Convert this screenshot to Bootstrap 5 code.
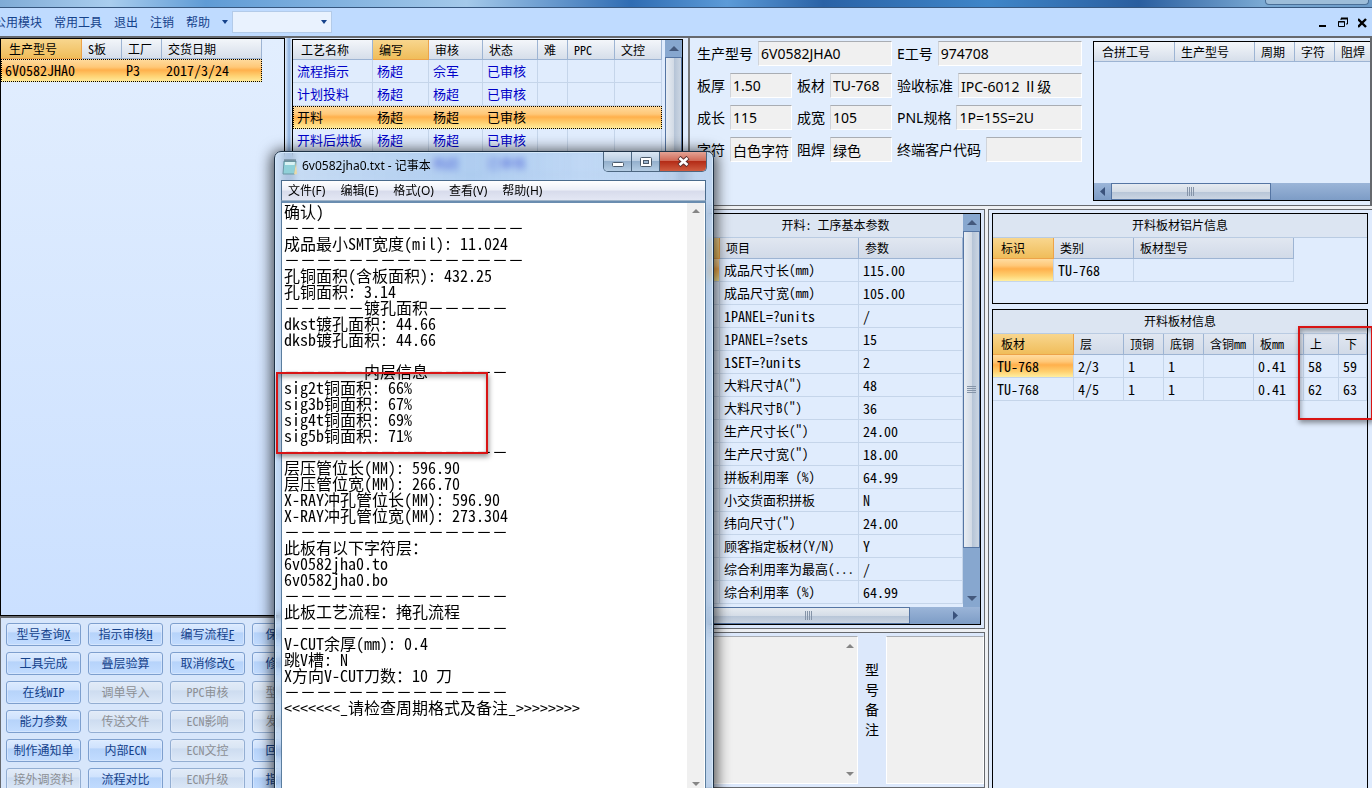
<!DOCTYPE html>
<html lang="zh-CN">
<head>
<meta charset="utf-8">
<meta name="viewport" content="width=device-width, initial-scale=1">
<title>工程管理</title>
<link href="https://cdn.jsdelivr.net/npm/bootstrap@5.3.0/dist/css/bootstrap.min.css" rel="stylesheet">
<style>
:root{--song:"Noto Sans Mono CJK SC","Noto Sans CJK SC",monospace;--ui:"Noto Sans","Noto Sans CJK SC",sans-serif}
html,body{height:100%}
body{font:12px/16px var(--song);color:#000;background:#e0ecfd;overflow:hidden}
button,input,textarea,select{font:inherit;color:inherit}
.titlestrip{height:8px;background:linear-gradient(90deg,#7fabd6,#a9cdee 8%,#5f9bd5 15%,#a4c9ea 34%,#2f6cb3 46%,#5c9bd8 53%,#2a62a6 60%,#3f86c9 72%,#2a5e9f 83%,#7aa9d3 92%,#6d9cc9);border-bottom:1px solid #36577f}
.capbtns{width:104px;height:5px;margin-right:3px;border:1px solid #4a6f97;border-top:0;border-radius:0 0 4px 4px;background:#9dbdd9}
.menubar{height:28px;background:#bfdbff;color:#15428b}
.menubar a{color:inherit;text-decoration:none}
.menubar nav{margin-left:-6px;gap:12px}
.combobox{position:relative;width:100px;height:22px}
.combobox select{width:100%;height:100%;display:block;appearance:none;background:#e9f2fe;border:1px solid #b3cbe9}
.combobox svg{position:absolute;right:5px;top:9px;pointer-events:none}
.mdi button{border:0;background:none;padding:0;line-height:0}
.workspace{border-top:2px solid #66696e;min-height:0}
.west{flex:0 0 688px;min-width:0}
.frame{border:1px solid #000;background:#e0ecfd;overflow:hidden}
.orders{width:285px;background:linear-gradient(#e2eefe,#cbe0ff)}
.split{width:7px;background:linear-gradient(90deg,#e2edfb,#8db1e0 60%,#e2edfb)}
.steps{width:391px;margin-top:1px}
.upper{flex:1 1 578px;min-height:0}
.grid{table-layout:fixed;border-collapse:separate;border-spacing:0}
.grid th{height:20px;padding:0 6px;font-weight:400;white-space:nowrap;overflow:hidden;background:linear-gradient(#f3f6fa,#d6deea);border-right:1px solid #9db4d3;border-bottom:1px solid #9db4d3}
.grid th:first-child{padding-left:8px}
.grid th.on{background:linear-gradient(#f8d68e,#f0bd5a);border-color:#eda349}
.grid td{height:23px;padding:0 4px;font-size:13px;white-space:nowrap;overflow:hidden;border-right:1px solid #c5d5ea;border-bottom:1px solid #c5d5ea}
.grid td.lat,.grid.nums td{font-size:14px}
.grid tr.sel{background:linear-gradient(#ffdca0,#ffc878 35%,#ffb04c 48%,#ffd070 72%,#ffeea0);outline:1px dotted #000;outline-offset:-1px}
.grid tr.sel td{border-color:transparent}
.grid td.cell{background:linear-gradient(#ffdca0,#ffc878 30%,#ffb04c 45%,#ffd070 75%,#ffeea0)}
.steps .grid tr:not(.sel) td{color:#0000c8}
.grid thead.deep th{height:21px}
.grid thead.deep th:not(.on){background:linear-gradient(#e1e7f1,#d1dae8)}
.caption-bar{height:24px;background:#dce5f2;border-bottom:1px solid #b9cbe2;text-align:center;line-height:22px;font-size:12px}
.vbar{width:17px;background:#87a7cf;border:0;flex:none}
.vbar .arrow,.hbar .arrow{width:17px;height:17px;display:flex;align-items:center;justify-content:center;flex:none}
.vbar .thumb{border:1px solid #5575a3;background:linear-gradient(90deg,#e8edf3,#d3dbe6 50%,#b4c3d6 52%,#ccd6e3)}
.hbar{height:17px;background:linear-gradient(#9bb5d8,#7d9cc6)}
.hbar .thumb{height:17px;border:1px solid #5575a3;background:linear-gradient(#e6ebf1,#d5dde7 50%,#b7c5d7 52%,#cbd5e2)}
.actions{border-left:1px solid #66696e;border-top:2px solid #66696e;background:#d7e6fb;padding:5px 5px;display:grid;grid-template-columns:repeat(8,75px);grid-auto-rows:23px;gap:6px 7px;height:172px;overflow:hidden}
.actions button{border:1px solid #7d9fce;border-radius:3px;background:linear-gradient(#dcebff,#cfe2fd 38%,#b6d3fa 42%,#c2dcff);color:#15428b;padding:0 0 2px;line-height:18px;font-size:12px;white-space:nowrap;box-shadow:inset 0 0 0 1px #e4effd88}
.actions button:disabled{background:linear-gradient(#e2ebf7,#d9e5f4 38%,#cddcf0 42%,#dce8f7);color:#8c8f94;border-color:#93aed2}
.east{min-width:0;background:#eef0f3}
.top{flex:none;height:168px;background:#e1edfd;border-bottom:1px solid #66696e;border-left:2px solid #77797c;border-right:2px solid #66696e;padding-left:7px}
.spec{display:grid;grid-template-columns:95px 95px 185px;gap:7px 5px;padding-top:3px;align-content:start;font:14px/20px var(--ui);width:385px;flex:none}
.spec div{display:flex;align-items:center;gap:5px;height:25px}
.spec input{flex:1 1 0;min-width:0;width:0;height:25px;padding:0 2px;border:1px solid #fff;border-top-color:#a9adb3;border-left-color:#d0d4da;background:#f0f0f0;border-radius:0}
.spec label{white-space:nowrap}
.merge{flex:1;min-width:0;margin:3px 0 4px 11px;border-right:0}
.lower{gap:3px;padding-top:3px;min-height:0}
.mid{width:282px;margin-left:15px;flex:none;gap:3px}
.outer{border:1px solid #66696e;background:#dce8fb;padding:3px}
.params{height:420px;flex:none}
.remarks{padding:3px 0 3px 3px;gap:4px;min-height:0}
.remarks textarea{resize:none;border:1px solid #fff;border-top-color:#a9adb3;background:#f0f0f0;border-radius:0;padding:2px;height:100%;overflow:hidden;display:block}
.remarks label{width:20px;font:14px/20px var(--ui);text-align:center}
.boards{border-bottom:0;border-right:0;background:#dfebfd;padding-bottom:0;padding-right:4px;gap:5px}
.notepad{position:absolute;z-index:5;left:274px;top:151px;bottom:-8px;width:440px;border:1px solid #1f3246;border-radius:7px 7px 0 0;padding:0 7px 0 6px;box-shadow:inset 0 0 0 1px #d5e8fa,0 2px 14px 3px rgba(0,0,0,.65);background:linear-gradient(90deg,#b8d2ee88,#8fb9e899 45%,#a3c6ee88 70%,#b2cceabb);backdrop-filter:blur(3px);font-family:var(--ui)}
.notepad header{height:28px}
.winbtns{position:absolute;right:6px;top:0;height:20px;display:flex;border:1px solid #4d6781;border-top:0;border-radius:0 0 5px 5px;overflow:hidden}
.winbtns button{border:0;border-right:1px solid #4d6781;padding:0;width:28px;background:linear-gradient(#dbe7f4,#bccfe3 45%,#94b0cd 50%,#b5cde4);line-height:0}
.winbtns button:last-child{border:0;width:46px;background:linear-gradient(#e3a395,#d06a57 45%,#b42c17 50%,#cf5c40)}
.note-menu{height:21px;border:1px solid #4a6b8c;border-bottom-color:#9fb4c9;background:linear-gradient(#fff,#edf0f8 45%,#d8dcec 55%,#e3e7f4);gap:15px;padding-left:6px;line-height:19px}
.note-menu a{color:#000;text-decoration:none}
.note-body{border:1px solid #5a7d9e;border-top:2px solid #6a8db0;background:#fff}
.note-body textarea{flex:1;min-width:0;border:0;outline:0;resize:none;overflow:hidden;padding:0 0 0 2px;font:16px/16px var(--song);background:#fff;white-space:pre}
.note-bar{width:17px;background:#f0f0f0;margin-right:1px;padding:6px 0 8px}
.redbox{position:absolute;border:2px solid #d81414;box-shadow:1px 3px 5px #0006,inset 1px 3px 5px #0005;pointer-events:none;z-index:6}
.rb-notes{left:1px;top:220px;width:212px;height:82px}
.rb-boards{right:-5px;top:17px;width:75px;height:94px}
</style>
</head>
<body class="d-flex flex-column">
<div class="titlestrip d-flex justify-content-end flex-shrink-0"><div class="capbtns"></div></div>
<div class="menubar d-flex align-items-center flex-shrink-0">
  <nav class="d-flex align-items-center">
    <a href="#">公用模块</a><a href="#">常用工具</a><a href="#">退出</a><a href="#">注销</a><a href="#">帮助</a>
    <svg width="6" height="4"><path d="M0 0h6L3 4z" fill="#15428b"/></svg>
  </nav>
  <div class="combobox ms-1"><select aria-label="模块"><option></option></select><svg width="6" height="4"><path d="M0 0h6L3 4z" fill="#15428b"/></svg></div>
  <div class="mdi ms-auto d-flex align-items-center gap-2 pe-1">
    <button aria-label="最小化"><svg width="12" height="12"><path d="M1 9h7v2H1z"/></svg></button>
    <button aria-label="还原"><svg width="12" height="12" fill="none" stroke="#000"><path d="M3 4V2.500h6.500V8H8M3 2h7M3 3h7M.5 5.500h6v5h-6zM0 6h7"/></svg></button>
    <button aria-label="关闭"><svg width="10" height="12"><path d="M0 3l8 8M8 3l-8 8" stroke="#000" stroke-width="2.400"/></svg></button>
  </div>
</div>

<main class="workspace d-flex flex-fill">
  <section class="west d-flex flex-column">
    <div class="upper d-flex">
      <div class="orders frame">
        <table class="grid" style="width:261px">
          <colgroup><col style="width:81px"><col style="width:40px"><col style="width:40px"><col style="width:100px"></colgroup>
          <thead><tr><th class="on">生产型号</th><th>S板</th><th>工厂</th><th>交货日期</th></tr></thead>
          <tbody><tr class="sel"><td class="lat">6V0582JHA0</td><td></td><td class="lat">P3</td><td class="lat">2017/3/24</td></tr></tbody>
        </table>
      </div>
      <div class="split"></div>
      <div class="steps frame d-flex justify-content-between">
        <table class="grid align-self-start" style="width:369px">
          <colgroup><col style="width:80px"><col style="width:56px"><col style="width:54px"><col style="width:55px"><col style="width:30px"><col style="width:47px"><col style="width:47px"></colgroup>
          <thead><tr><th>工艺名称</th><th class="on">编写</th><th>审核</th><th>状态</th><th>难</th><th>PPC</th><th>文控</th></tr></thead>
          <tbody>
          <tr><td>流程指示</td><td>杨超</td><td>佘军</td><td>已审核</td><td></td><td></td><td></td></tr>
          <tr><td>计划投料</td><td>杨超</td><td>杨超</td><td>已审核</td><td></td><td></td><td></td></tr>
          <tr class="sel"><td>开料</td><td>杨超</td><td>杨超</td><td>已审核</td><td></td><td></td><td></td></tr>
          <tr><td>开料后烘板</td><td>杨超</td><td>杨超</td><td>已审核</td><td></td><td></td><td></td></tr>
          <tr><td></td><td></td><td>杨超</td><td>已审核</td><td></td><td></td><td></td></tr>
          </tbody>
        </table>
        <div class="vbar d-flex flex-column"><span class="arrow"><svg width="10" height="5"><path d="M0 5h10L5 0z" fill="#44597d"/></svg></span><span class="thumb flex-fill"></span></div>
      </div>
    </div>
    <div class="actions">
      <button>型号查询<u>X</u></button><button>指示审核<u>H</u></button><button>编写流程<u>F</u></button><button>保存流程</button><span></span><span></span><span></span><span></span>
      <button>工具完成</button><button>叠层验算</button><button>取消修改<u>C</u></button><button>修改流程</button><span></span><span></span><span></span><span></span>
      <button>在线WIP</button><button disabled>调单导入</button><button disabled>PPC审核</button><button disabled>型号升级</button><span></span><span></span><span></span><span></span>
      <button>能力参数</button><button disabled>传送文件</button><button disabled>ECN影响</button><button disabled>发送文件</button><span></span><span></span><span></span><span></span>
      <button>制作通知单</button><button>内部ECN</button><button disabled>ECN文控</button><button>回退流程</button><span></span><span></span><span></span><span></span>
      <button disabled>接外调资料</button><button>流程对比</button><button disabled>ECN升级</button><button>指示下发</button>
    </div>
  </section>

  <section class="east d-flex flex-column flex-fill">
    <div class="top d-flex">
      <form class="spec">
        <div style="grid-column:span 2"><label for="f1">生产型号</label><input id="f1" readonly value="6V0582JHA0"></div>
        <div><label for="f2">E工号</label><input id="f2" readonly value="974708"></div>
        <div><label for="f3">板厚</label><input id="f3" readonly value="1.50"></div>
        <div><label for="f4">板材</label><input id="f4" readonly value="TU-768"></div>
        <div><label for="f5">验收标准</label><input id="f5" readonly value="IPC-6012 Ⅱ级"></div>
        <div><label for="f6">成长</label><input id="f6" readonly value="115"></div>
        <div><label for="f7">成宽</label><input id="f7" readonly value="105"></div>
        <div><label for="f8">PNL规格</label><input id="f8" readonly value="1P=15S=2U"></div>
        <div><label for="f9">字符</label><input id="f9" readonly value="白色字符"></div>
        <div><label for="f10">阻焊</label><input id="f10" readonly value="绿色"></div>
        <div><label for="f11">终端客户代码</label><input id="f11" readonly value=""></div>
      </form>
      <div class="merge frame d-flex flex-column justify-content-between">
        <table class="grid" style="width:280px">
          <colgroup><col style="width:81px"><col style="width:80px"><col style="width:40px"><col style="width:40px"><col style="width:39px"></colgroup>
          <thead><tr><th>合拼工号</th><th>生产型号</th><th>周期</th><th>字符</th><th>阻焊</th></tr></thead>
        </table>
        <div class="hbar d-flex"><span class="arrow"><svg width="5" height="9"><path d="M5 0v9L0 4.500z" fill="#3a527c"/></svg></span><span class="thumb d-flex align-items-center justify-content-center" style="width:160px"><svg width="8" height="9"><path d="M.5 0v9M2.500 0v9M4.500 0v9M6.500 0v9" stroke="#8594a8"/></svg></span></div>
      </div>
    </div>
    <div class="lower d-flex flex-fill">
      <div class="mid d-flex flex-column">
        <div class="outer params d-flex">
          <div class="frame flex-fill d-flex flex-column justify-content-between">
            <div class="d-flex flex-fill overflow-hidden">
              <div class="flex-fill">
                <div class="caption-bar">开料: 工序基本参数</div>
                <table class="grid w-100">
                  <colgroup><col style="width:12px"><col style="width:139px"><col></colgroup>
                  <thead class="deep"><tr><th class="on"></th><th>项目</th><th>参数</th></tr></thead>
                  <tbody>
                  <tr><td class="cell"></td><td>成品尺寸长(mm)</td><td class="lat">115.00</td></tr>
                  <tr><td></td><td>成品尺寸宽(mm)</td><td class="lat">105.00</td></tr>
                  <tr><td></td><td class="lat">1PANEL=?units</td><td class="lat">/</td></tr>
                  <tr><td></td><td class="lat">1PANEL=?sets</td><td class="lat">15</td></tr>
                  <tr><td></td><td class="lat">1SET=?units</td><td class="lat">2</td></tr>
                  <tr><td></td><td>大料尺寸A(")</td><td class="lat">48</td></tr>
                  <tr><td></td><td>大料尺寸B(")</td><td class="lat">36</td></tr>
                  <tr><td></td><td>生产尺寸长(")</td><td class="lat">24.00</td></tr>
                  <tr><td></td><td>生产尺寸宽(")</td><td class="lat">18.00</td></tr>
                  <tr><td></td><td>拼板利用率 (%)</td><td class="lat">64.99</td></tr>
                  <tr><td></td><td>小交货面积拼板</td><td class="lat">N</td></tr>
                  <tr><td></td><td>纬向尺寸(")</td><td class="lat">24.00</td></tr>
                  <tr><td></td><td>顾客指定板材(Y/N)</td><td class="lat">Y</td></tr>
                  <tr><td></td><td>综合利用率为最高(...</td><td class="lat">/</td></tr>
                  <tr><td></td><td>综合利用率 (%)</td><td class="lat">64.99</td></tr>
                  </tbody>
                </table>
              </div>
              <div class="vbar d-flex flex-column"><span class="arrow"><svg width="10" height="5"><path d="M0 5h10L5 0z" fill="#44597d"/></svg></span><span class="thumb d-flex align-items-center justify-content-center" style="height:317px"><svg width="9" height="8"><path d="M0 .5h9M0 2.500h9M0 4.500h9M0 6.500h9" stroke="#8594a8"/></svg></span><span class="arrow mt-auto"><svg width="10" height="5"><path d="M0 0h10L5 5z" fill="#44597d"/></svg></span></div>
            </div>
            <div class="hbar d-flex"><span class="thumb d-flex align-items-center justify-content-center" style="width:202px"><svg width="8" height="9"><path d="M.5 0v9M2.500 0v9M4.500 0v9M6.500 0v9" stroke="#8594a8"/></svg></span><span class="arrow ms-auto me-3"><svg width="5" height="9"><path d="M0 0v9l5-4.500z" fill="#3a527c"/></svg></span></div>
          </div>
        </div>
        <div class="outer remarks d-flex flex-fill">
          <div class="d-flex flex-fill position-relative"><textarea class="w-100" aria-label="备注" readonly></textarea>
            <div class="position-absolute end-0 top-0 h-100 d-flex flex-column justify-content-between py-2 pe-1"><svg width="8" height="4"><path d="M0 4h8L4 0z" fill="#858585"/></svg><svg width="8" height="4"><path d="M0 0h8L4 4z" fill="#858585"/></svg></div></div>
          <label for="model-note" class="pt-4">型<br>号<br>备<br>注</label>
          <textarea id="model-note" readonly style="width:98px"></textarea>
        </div>
      </div>
      <div class="outer boards d-flex flex-column flex-fill">
        <div class="frame" style="height:91px">
          <div class="caption-bar">开料板材铝片信息</div>
          <table class="grid" style="width:301px">
            <colgroup><col style="width:61px"><col style="width:80px"><col style="width:160px"></colgroup>
            <thead class="deep"><tr><th class="on">标识</th><th>类别</th><th>板材型号</th></tr></thead>
            <tbody><tr><td class="cell"></td><td class="lat">TU-768</td><td></td></tr></tbody>
          </table>
        </div>
        <div class="position-relative flex-fill d-flex">
        <div class="frame flex-fill border-bottom-0">
          <div class="caption-bar">开料板材信息</div>
          <table class="grid nums w-100">
            <colgroup><col style="width:81px"><col style="width:50px"><col style="width:40px"><col style="width:40px"><col style="width:50px"><col style="width:50px"><col style="width:35px"><col></colgroup>
            <thead class="deep"><tr><th class="on">板材</th><th>层</th><th>顶铜</th><th>底铜</th><th>含铜mm</th><th>板mm</th><th>上</th><th>下</th></tr></thead>
            <tbody>
            <tr><td class="cell">TU-768</td><td>2/3</td><td>1</td><td>1</td><td></td><td>0.41</td><td>58</td><td>59</td></tr>
            <tr><td>TU-768</td><td>4/5</td><td>1</td><td>1</td><td></td><td>0.41</td><td>62</td><td>63</td></tr>
            </tbody>
          </table>
        </div>
        <div class="redbox rb-boards"></div>
        </div>
      </div>
    </div>
  </section>
</main>

<section class="notepad d-flex flex-column">
  <header class="d-flex align-items-center gap-1 flex-shrink-0">
    <svg width="17" height="17"><path d="M3 3h12l-1 13H2z" fill="#8fd0d8" stroke="#6d97a5"/><path d="M4 4h10l-.5 3H4z" fill="#d9f2f3"/><path d="M4 1v3M6 1v3M8 1v3M10 1v3M12 1v3M14 1v3" stroke="#5b7480"/><path d="M15 4l1 12-3 .5z" fill="#e9d9a8"/></svg>
    <span>6v0582jha0.txt - 记事本</span>
    <div class="winbtns">
      <button aria-label="最小化"><svg width="12" height="10"><rect x=".5" y="5.500" width="11" height="4" rx="1" fill="#fff" stroke="#4b5a6b"/></svg></button>
      <button aria-label="最大化"><svg width="12" height="10"><rect x=".5" y=".5" width="11" height="9" rx="1" fill="#fff" stroke="#4b5a6b"/><rect x="3.500" y="3.500" width="5" height="3" fill="#9db6d0" stroke="#4b5a6b"/></svg></button>
      <button aria-label="关闭"><svg width="13" height="11"><path d="M2 1.500l9 8M11 1.500l-9 8" stroke="#5a3030" stroke-width="4.500"/><path d="M2.500 2l8 7M10.500 2l-8 7" stroke="#fff" stroke-width="2.600"/></svg></button>
    </div>
  </header>
  <nav class="note-menu d-flex flex-shrink-0"><a href="#">文件(F)</a><a href="#">编辑(E)</a><a href="#">格式(O)</a><a href="#">查看(V)</a><a href="#">帮助(H)</a></nav>
  <div class="note-body d-flex flex-fill">
    <textarea aria-label="文本" spellcheck="false">确认)
－－－－－－－－－－－－－－－
成品最小SMT宽度(mil): 11.024
－－－－－－－－－－－－－－－
孔铜面积(含板面积): 432.25
孔铜面积: 3.14
－－－－－镀孔面积－－－－－
dkst镀孔面积: 44.66
dksb镀孔面积: 44.66

－－－－－内层信息－－－－－
sig2t铜面积: 66%
sig3b铜面积: 67%
sig4t铜面积: 69%
sig5b铜面积: 71%
－－－－－－－－－－－－－－
层压管位长(MM): 596.90
层压管位宽(MM): 266.70
X-RAY冲孔管位长(MM): 596.90
X-RAY冲孔管位宽(MM): 273.304
－－－－－－－－－－－－－－
此板有以下字符层：
6v0582jha0.to
6v0582jha0.bo
－－－－－－－－－－－－－－
此板工艺流程：掩孔流程
－－－－－－－－－－－－－－
V-CUT余厚(mm): 0.4
跳V槽: N
X方向V-CUT刀数：10 刀
－－－－－－－－－－－－－－
&lt;&lt;&lt;&lt;&lt;&lt;&lt;_请检查周期格式及备注_&gt;&gt;&gt;&gt;&gt;&gt;&gt;&gt;</textarea>
    <div class="note-bar d-flex flex-column align-items-center justify-content-between"><svg width="8" height="4"><path d="M0 4h8L4 0z" fill="#858585"/></svg><svg width="8" height="4"><path d="M0 0h8L4 4z" fill="#858585"/></svg></div>
  </div>
  <div class="redbox rb-notes"></div>
</section>
<script src="https://cdn.jsdelivr.net/npm/bootstrap@5.3.0/dist/js/bootstrap.bundle.min.js"></script>
</body>
</html>
